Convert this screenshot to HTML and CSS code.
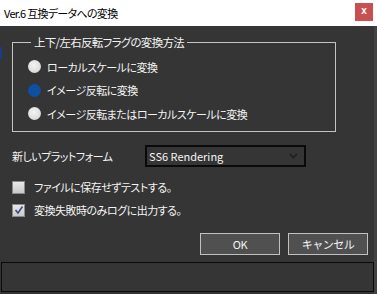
FILE: index.html
```html
<!DOCTYPE html>
<html lang="ja">
<head>
  <meta charset="UTF-8">
  <title>Ver.6 互換データへの変換</title>
  <link rel="stylesheet" href="styles.css">
</head>
<body>
  <div class="window">
    <div class="titlebar">
      <span class="title">Ver.6 互換データへの変換</span>
      <span class="close">x</span>
    </div>
    <div class="content">
      <fieldset class="group">
        <legend>上下/左右反転フラグの変換方法</legend>
        <label class="radio-row"><span class="radio"></span>ローカルスケールに変換</label>
        <label class="radio-row"><span class="radio checked"></span>イメージ反転に変換</label>
        <label class="radio-row"><span class="radio"></span>イメージ反転またはローカルスケールに変換</label>
      </fieldset>

      <div class="platform-row">
        <span class="platform-label">新しいプラットフォーム</span>
        <div class="select">
          <span>SS6 Rendering</span>
          <svg class="chevron" width="9" height="6" viewBox="0 0 9 6">
            <path d="M1 1 L4.5 4.5 L8 1" fill="none" stroke="#1e1e1e" stroke-width="1.6"/>
          </svg>
        </div>
      </div>

      <label class="check-row"><span class="checkbox"></span>ファイルに保存せずテストする。</label>
      <label class="check-row"><span class="checkbox">
        <svg width="10" height="10" viewBox="0 0 10 10">
          <path d="M1.5 5 L4 8 L8.5 1.5" fill="none" stroke="#3b4a8c" stroke-width="1.6"/>
        </svg>
      </span>変換失敗時のみログに出力する。</label>

      <div class="buttons">
        <button class="btn">OK</button>
        <button class="btn">キャンセル</button>
      </div>
    </div>
    <div class="status"></div>
    <span class="edge-mark"></span>
  </div>
</body>
</html>
```

FILE: styles.css
```css
body {
  margin: 0;
  background-color: #353535;
  font-family: "Noto Sans CJK JP", "Noto Sans", sans-serif;
  font-size: 11px;
  font-feature-settings: "palt";
  letter-spacing: -0.5px;
  color: #f4f4f4;
}
.window {
  position: relative;
  width: 374px;
  height: 294px;
  border-right: 3px solid #424242;
  background-color: #353535;
  display: flex;
  flex-direction: column;
}
.titlebar {
  height: 26px;
  background-color: #ffffff;
  color: #000000;
  display: flex;
  align-items: flex-start;
  justify-content: space-between;
  margin-right: -3px;
}
.title {
  font-size: 11px;
  letter-spacing: -0.7px;
  padding: 5px 0 0 4px;
}
.close {
  width: 18px;
  height: 18px;
  margin: 3px 4px 0 0;
  background-color: #c75050;
  color: #ffffff;
  font-family: "Liberation Sans", sans-serif;
  font-size: 10px;
  font-weight: bold;
  letter-spacing: 0;
  line-height: 16px;
  text-align: center;
}
.content {
  padding: 8px 0 0 12px;
  flex: 1;
}
.group {
  width: 297px;
  margin: 0;
  padding: 5px 10px 5px 15px;
  border: 1px solid #c4c4c4;
}
.group legend {
  margin-left: 3px;
  padding: 0 3px;
  line-height: 16px;
  font-size: 11.5px;
  letter-spacing: -0.7px;
}
.radio-row {
  display: flex;
  align-items: center;
  gap: 6px;
  height: 23.5px;
}
.radio {
  width: 13px;
  height: 13px;
  border-radius: 50%;
  background: radial-gradient(circle at 45% 40%, #f4f4f4 0%, #dedede 60%, #c8c8c8 100%);
}
.radio.checked {
  background: #0d4fa0;
}
.platform-row {
  display: flex;
  align-items: center;
  margin-top: 13px;
  height: 22px;
}
.platform-label {
  width: 133px;
}
.select {
  width: 149px;
  height: 18px;
  border: 2px solid #0a0a0a;
  display: flex;
  align-items: center;
  justify-content: space-between;
  padding: 0 6px 0 2px;
  letter-spacing: 0;
}
.check-row {
  display: flex;
  align-items: center;
  gap: 9px;
  height: 23px;
}
.check-row:first-of-type {
  margin-top: 9px;
}
.checkbox {
  width: 11px;
  height: 11px;
  border: 1px solid #8a8a8a;
  background: linear-gradient(#e8e8e8, #c9c9c9);
  display: flex;
  align-items: center;
  justify-content: center;
}
.buttons {
  display: flex;
  justify-content: flex-end;
  gap: 8px;
  margin: 11px 6px 0 0;
}
.btn {
  width: 80px;
  height: 22px;
  background-color: #505050;
  border: 1px solid #c0c0c0;
  color: #f4f4f4;
  font-family: inherit;
  font-size: 11px;
  letter-spacing: inherit;
  padding: 0;
}
.status {
  height: 28px;
  margin: 0 0 2px 1px;
  border: 1px solid #0a0a0a;
}
.edge-mark {
  position: absolute;
  left: 0;
  top: 47px;
  width: 2px;
  height: 12px;
  background-color: #1c3a8c;
}
```
